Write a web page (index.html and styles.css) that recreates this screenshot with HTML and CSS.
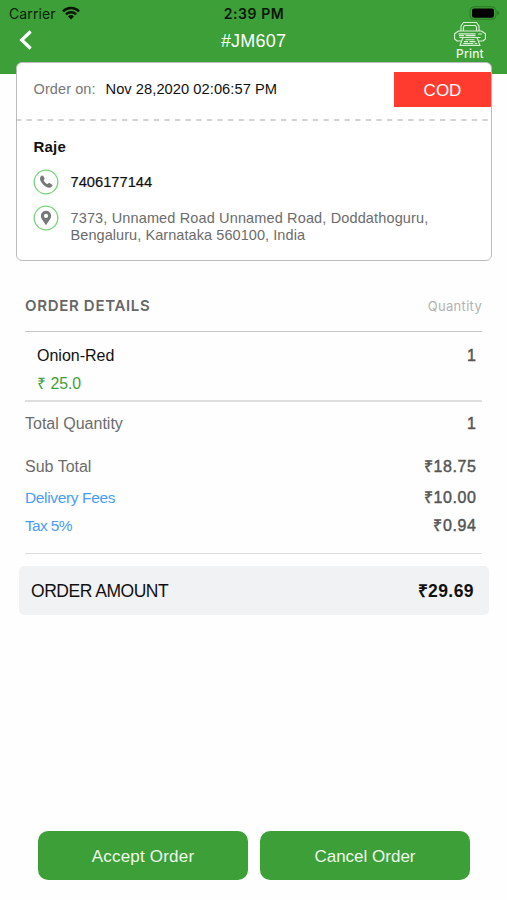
FILE: index.html
```html
<!DOCTYPE html>
<html lang="en">
<head>
<meta charset="utf-8">
<title>Order #JM607</title>
<link rel="stylesheet" href="styles.css">
</head>
<body>
<div class="screen">
  <header class="header">
    <div class="status">
      <span class="carrier">Carrier</span>
      <svg class="wifi" width="18" height="14" viewBox="0 0 18 14"><g fill="none" stroke="#061506" stroke-width="2.5"><path d="M1 5.3a11.3 11.3 0 0 1 16 0"/><path d="M4 8.4a7 7 0 0 1 10 0"/></g><path d="M9 13.6 6 10.5a4.3 4.3 0 0 1 6 0z" fill="#061506"/></svg>
      <span class="time">2:39 PM</span>
      <svg class="battery" width="31" height="14" viewBox="0 0 31 14"><rect x="1" y=".7" width="26" height="12.6" rx="4" fill="none" stroke="#2c7b27"/><rect x="3" y="2.4" width="22" height="9.4" rx="2.3"/><path d="M28.4 4.7v4.6q1.8-.9 1.8-2.3t-1.8-2.3" fill="#2c7b27"/></svg>
    </div>
    <div class="nav">
      <svg class="back" width="14" height="20" viewBox="0 0 14 20"><path d="M11.7 1.5 2.7 10l9 8.5" fill="none" stroke="#fff" stroke-width="3.2"/></svg>
      <h1 class="title">#JM607</h1>
      <div class="print">
        <svg width="34" height="26" viewBox="0 0 34 26" fill="none" stroke="#d9f0d5" stroke-width="1.15" stroke-linejoin="round"><path d="M8 10V5L10.5 1.5h13L26 5v5M10.5 10V6l1-1.5h11l1 1.5v4"/><path d="M8 20H4.2L1.6 18v-5.2L5.5 10h23l3.9 2.8V18l-2.6 2H26"/><path d="M5.5 12.8h17M6 14.6h5m1.5 0h10M25 13h4M6.5 16.5h21M10 16.5 7 24.4h20l-3-7.9M12.5 18.7h9M11 20.6h4m1.5 0h6M10.2 22.5h10m1.5 0h2.5"/></svg>
        <span class="print-label">Print</span>
      </div>
    </div>
  </header>

  <section class="card">
    <div class="card-top">
      <span class="placed">Order on:</span>
      <span class="date">Nov 28,2020 02:06:57 PM</span>
      <span class="cod">COD</span>
    </div>
    <svg class="dashes" width="473" height="2"><path d="M0 1H472" stroke="#c3c3c3" stroke-width="1.3" stroke-dasharray="5.3 5.3" stroke-dashoffset="1"/></svg>
    <div class="customer">
      <div class="name">Raje</div>
      <div class="contact">
        <svg width="26" height="26" viewBox="0 0 26 26"><circle cx="13" cy="13" r="11.8" fill="#fff" stroke="#77d477" stroke-width="1.3"/><path d="M8.2 7c.9-.8 1.6-.6 2.2.3l1 1.8c.4.8.1 1.3-.6 1.9-.5.5.8 2.1 1.8 2.9.8.7 1.7 1.2 2.2.9.8-.7 1.3-1 2.1-.6l1.8 1.2c.9.6 1 1.2.2 2.1-1.3 1.6-3.4 1.6-5.8.3-2.1-1.2-4-3.1-5.2-5.3-1.2-2.2-1.2-4.2.3-5.5z" fill="#777"/></svg>
        <span class="phone">7406177144</span>
      </div>
      <div class="contact place">
        <svg width="26" height="26" viewBox="0 0 26 26"><circle cx="13" cy="13" r="11.8" fill="#fff" stroke="#77d477" stroke-width="1.3"/><path fill-rule="evenodd" d="M13 5.8a5.1 5.1 0 0 1 5.1 5.1c0 3-3.5 6.2-5.1 9.4-1.6-3.2-5.1-6.4-5.1-9.4A5.1 5.1 0 0 1 13 5.8zm0 3a2.1 2.1 0 1 0 0 4.2 2.1 2.1 0 0 0 0-4.2z" fill="#777"/></svg>
        <address class="address"><span class="line-a">7373, Unnamed Road Unnamed Road, Doddathoguru,</span><br><span class="line-b">Bengaluru, Karnataka 560100, India</span></address>
      </div>
    </div>
  </section>

  <section class="details">
    <div class="row heading"><h2 class="heading-text">ORDER DETAILS</h2><span class="quantity">Quantity</span></div>
    <div class="item">
      <div class="row product"><span class="product-name">Onion-Red</span><span class="value">1</span></div>
      <div class="price">₹ 25.0</div>
    </div>
    <div class="row total"><span class="total-label">Total Quantity</span><span class="value">1</span></div>
    <div class="row subtotal"><span class="sub-label">Sub Total</span><span class="value money">₹18.75</span></div>
    <div class="row delivery"><span class="link">Delivery Fees</span><span class="value money">₹10.00</span></div>
    <div class="row tax"><span class="link tax-label">Tax 5%</span><span class="value money">₹0.94</span></div>
  </section>

  <div class="amount"><span class="amount-label">ORDER AMOUNT</span><strong class="amount-value">₹29.69</strong></div>

  <footer class="actions">
    <button class="button accept">Accept Order</button>
    <button class="button">Cancel Order</button>
  </footer>
</div>
</body>
</html>
```
FILE: styles.css
```css
* { box-sizing: border-box; }
body { margin: 0; background: #fefefe; font-family: "Liberation Sans", Arial, sans-serif; color: #111; }
svg { display: block; flex: none; }
span, h1, h2 { white-space: nowrap; }
.screen { width: 507px; height: 900px; display: flex; flex-direction: column; overflow: hidden; }
.header { height: 74px; flex: none; background: #3d9f37; }
.status { height: 28px; display: grid; grid-template-columns: 62px 100px 184px 1fr; align-items: center; }
.carrier { padding-left: 9px; font: 14px/28px Inter, sans-serif; letter-spacing: .12px; color: #0a210a; }
.wifi { margin-top: -3px; }
.time { text-align: center; font: 600 14px/28px Inter, sans-serif; letter-spacing: .55px; color: #061506; }
.battery { justify-self: end; margin: -2px 7px 0 0; }
.nav { height: 46px; display: grid; grid-template-columns: 80px 1fr 80px; }
.back { margin: 2px 0 0 18.5px; }
.title { margin: 0; text-align: center; font-size: 18px; line-height: 26px; font-weight: 400; color: #fff; letter-spacing: .2px; }
.print { display: flex; flex-direction: column; align-items: center; margin: -7px 0 0 6px; }
.print-label { font: 500 12px/13px Inter, sans-serif; color: #e6f6e2; letter-spacing: .2px; }

.card { width: 476.5px; height: 199px; flex: none; margin: -12px 0 0 15.5px; background: #fff; border: 1.5px solid #bcbcbc; border-radius: 6px; }
.card-top { height: 56px; display: flex; align-items: center; padding: 0 0 4px 17px; }
.placed { width: 72px; font-size: 14.5px; color: #777; letter-spacing: .1px; }
.date { font-size: 14.7px; color: #111; letter-spacing: .04px; }
.placed, .date { margin-top: -1px; }
.cod { width: 97px; height: 35px; margin: 1px 0 0 auto; background: #ff3b30; color: #fff; font-size: 17px; line-height: 37px; text-align: center; }
.customer { padding: 17px 0 0 17px; }
.name { font-size: 15px; line-height: 18px; font-weight: 700; letter-spacing: .2px; }
.contact { display: flex; gap: 11.5px; margin: 13px 0 0 -.5px; }
.contact.place { margin-top: 10px; }
.phone { font-size: 14.7px; line-height: 26px; -webkit-text-stroke: .2px #111; }
.address { font-style: normal; font-size: 14.5px; line-height: 17px; color: #6c6c6c; padding-top: 5px; }
.line-a { letter-spacing: .14px; }
.line-b { letter-spacing: .07px; }

.details { margin: 31px 25px 0; flex: none; border-bottom: 1px solid #ddd; height: 262px; }
.row { display: flex; justify-content: space-between; align-items: center; }
.heading { height: 40px; border-bottom: 1.5px solid #c6c6c6; padding-bottom: 12px; }
.heading-text { margin: 0; font: 600 15px/20px Inter, sans-serif; color: #666; letter-spacing: .68px; }
.quantity { font: 13px/20px Inter, sans-serif; color: #b2b2b2; letter-spacing: .3px; }
.item { height: 70px; border-bottom: 2px solid #dedede; padding: 13px 0 0 12px; }
.value { margin-right: 5.5px; font-size: 16px; color: #555; -webkit-text-stroke: .45px #555; letter-spacing: .6px; }
.money { margin-top: -2px; }
.product, .price { height: 22px; line-height: 22px; font-size: 16px; }
.price { margin-top: 6px; font-size: 15.8px; color: #3d9f37; }
.total { height: 43px; }
.total-label, .sub-label { font-size: 16px; color: #6c6c6c; }
.link { font-size: 15.5px; letter-spacing: -.36px; }
.tax-label { letter-spacing: -.65px; }
.subtotal { height: 43px; }
.delivery { height: 20px; }
.tax { height: 20px; margin-top: 8px; }
.row .link { color: #4a9df2; }

.amount { height: 49px; flex: none; margin: 12px 18.5px 0 19px; padding: 1px 14.5px 0 12px; display: flex; justify-content: space-between; align-items: center; background: #f1f2f4; border-radius: 5px; }
.amount-label { font-size: 17.5px; letter-spacing: -.48px; }
.amount-value { font-size: 17.5px; line-height: 20px; letter-spacing: .45px; margin-top: -1px; }

.actions { margin: auto 37px 20px 38px; display: grid; grid-template-columns: 210px 210px; gap: 12px; }
.button { height: 49px; border: 0; border-radius: 10px; padding: 3px 0 0; background: #3d9f37; color: #edfaeb; font: 17px "Liberation Sans", sans-serif; }
.accept { letter-spacing: .2px; }
```
